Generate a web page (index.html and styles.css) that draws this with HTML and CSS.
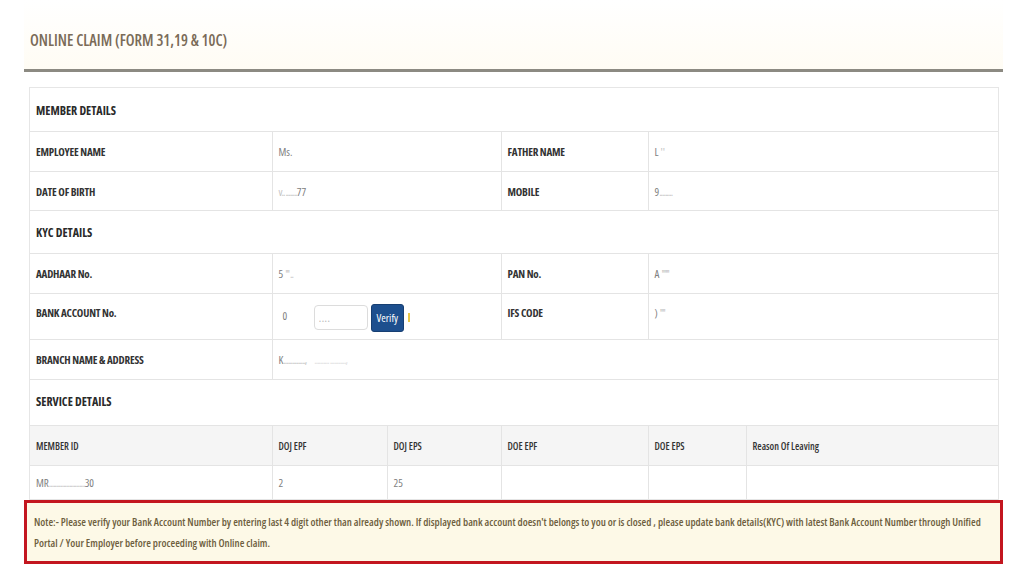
FILE: index.html
```html
<!DOCTYPE html>
<html lang="en">
<head>
    <meta charset="UTF-8">
    <meta name="viewport" content="width=device-width, initial-scale=1.0">
    <title>Online Claim (Form 31,19 &amp; 10C)</title>
    <link rel="stylesheet" href="styles.css">
</head>
<body>
    <div class="page">
        <div class="title-bar">
            <h1>ONLINE CLAIM (FORM 31,19 &amp; 10C)</h1>
        </div>

        <div class="panel">
            <table class="claim-table">
                <colgroup>
                    <col class="c1"><col class="c2"><col class="c3"><col class="c4"><col class="c5"><col class="c6">
                </colgroup>
                <tr class="section-row first"><td colspan="6">MEMBER DETAILS</td></tr>
                <tr>
                    <td class="label">EMPLOYEE NAME</td>
                    <td class="value" colspan="2">Ms.</td>
                    <td class="label">FATHER NAME</td>
                    <td class="value" colspan="2">L <span class="blur">' '</span></td>
                </tr>
                <tr class="short">
                    <td class="label">DATE OF BIRTH</td>
                    <td class="value" colspan="2"><span class="blur">v.. ........</span>77</td>
                    <td class="label">MOBILE</td>
                    <td class="value" colspan="2">9<span class="blur">.........</span></td>
                </tr>
                <tr class="section-row"><td colspan="6">KYC DETAILS</td></tr>
                <tr>
                    <td class="label">AADHAAR No.</td>
                    <td class="value" colspan="2">5 <span class="blur">'''  ..</span></td>
                    <td class="label">PAN No.</td>
                    <td class="value" colspan="2">A <span class="blur">''''''</span></td>
                </tr>
                <tr class="bank-row">
                    <td class="label">BANK ACCOUNT No.</td>
                    <td class="value verify-cell" colspan="2">
                        <div class="verify-box">
                            <span class="acc-start">0</span>
                            <input type="text" class="digits" value="....">
                            <button class="verify-btn">Verify</button>
                            <span class="mark"></span>
                        </div>
                    </td>
                    <td class="label">IFS CODE</td>
                    <td class="value" colspan="2">) <span class="blur">''''</span></td>
                </tr>
                <tr>
                    <td class="label">BRANCH NAME &amp; ADDRESS</td>
                    <td class="value" colspan="5">K<span class="blur">...............,</span><span class="faint">.......... ...........,</span></td>
                </tr>
                <tr class="section-row service"><td colspan="6">SERVICE DETAILS</td></tr>
                <tr class="head-row">
                    <td>MEMBER ID</td>
                    <td>DOJ EPF</td>
                    <td>DOJ EPS</td>
                    <td>DOE EPF</td>
                    <td>DOE EPS</td>
                    <td>Reason Of Leaving</td>
                </tr>
                <tr class="data-row">
                    <td>MR<span class="blur">.........................</span>30</td>
                    <td>2</td>
                    <td>25</td>
                    <td></td>
                    <td></td>
                    <td></td>
                </tr>
            </table>
        </div>

        <div class="note">
            Note:- Please verify your Bank Account Number by entering last 4 digit other than already shown. If displayed bank account doesn't belongs to you or is closed , please update bank details(KYC) with latest Bank Account Number through Unified Portal / Your Employer before proceeding with Online claim.
        </div>
    </div>
</body>
</html>
```

FILE: styles.css
```css
body {
    margin: 0;
    background: #ffffff;
    font-family: "Open Sans", "Liberation Sans", sans-serif;
    font-stretch: 75%;
    color: #333;
}
.page {
    width: 979px;
    margin-left: 24px;
}
.title-bar {
    height: 69px;
    display: flex;
    align-items: flex-end;
    background: linear-gradient(180deg, #ffffff 0%, #fffcf4 100%);
    border-bottom: 3px solid #8c8a82;
}
.title-bar h1 {
    margin: 0 0 18px 6px;
    font-size: 15.5px;
    font-weight: 600;
    color: #7a6b58;
}
.panel {
    margin: 15px 4px 0 5px;
    border: 1px solid #e6e6e6;
    border-bottom: none;
}
.claim-table {
    width: 100%;
    border-collapse: collapse;
    table-layout: fixed;
}
.c1 { width: 242px; }
.c2 { width: 115px; }
.c3 { width: 114px; }
.c4 { width: 147px; }
.c5 { width: 98px; }
.c6 { width: auto; }
.claim-table td {
    border: 1px solid #e4e4e4;
    padding: 0 6px;
    height: 39px;
    font-size: 11px;
    white-space: nowrap;
    overflow: hidden;
}
.claim-table tr:first-child td {
    border-top: none;
}
.claim-table tr td:first-child {
    border-left: none;
}
.claim-table tr td:last-child {
    border-right: none;
}
.claim-table tr.short td {
    height: 38px;
}
.section-row td {
    height: 41px;
    font-size: 12px;
    font-weight: 700;
    color: #2a2a2a;
    padding-top: 1px;
}
.section-row.first td {
    height: 42px;
}
.section-row.service td {
    height: 43px;
    padding-top: 0;
    padding-bottom: 2px;
}
.label {
    font-weight: 700;
    color: #333;
    letter-spacing: -0.2px;
}
.value {
    color: #808080;
    font-size: 11px;
}
.blur {
    color: #c4c4c4;
    letter-spacing: -1px;
}
.faint {
    color: #dedede;
    letter-spacing: -1px;
    margin-left: 8px;
}
.claim-table tr.bank-row td {
    height: 37px;
    padding-bottom: 8px;
}
.claim-table tr.bank-row td.verify-cell {
    padding-top: 5px;
    padding-bottom: 3px;
}
.verify-box {
    display: flex;
    align-items: center;
    gap: 3px;
}
.acc-start {
    width: 28px;
    padding-left: 4px;
    margin-top: -4px;
}
.digits {
    width: 44px;
    height: 23px;
    padding: 0 4px;
    border: 1px solid #dcdcdc;
    border-radius: 4px;
    color: #bbb;
    font-family: inherit;
    font-size: 11px;
}
.verify-btn {
    height: 28px;
    padding: 0 5px;
    background: #1d4f8e;
    color: #fff;
    border: 1px solid #173f72;
    border-radius: 3px;
    font-family: inherit;
    font-stretch: 75%;
    font-size: 11px;
}
.mark {
    width: 2px;
    height: 9px;
    margin-left: 1px;
    background: #e8c84a;
}
.claim-table .head-row td {
    background: #f5f5f5;
    font-size: 10px;
    font-weight: 600;
    color: #333;
    height: 39px;
}
.claim-table .data-row td {
    height: 33px;
    color: #808080;
}
.note {
    border: 3px solid #c3161f;
    background: #fdf9e7;
    padding: 9px 4px 7px 7px;
    font-size: 10.75px;
    font-weight: 600;
    line-height: 21px;
    color: #6e5f3e;
}
```
